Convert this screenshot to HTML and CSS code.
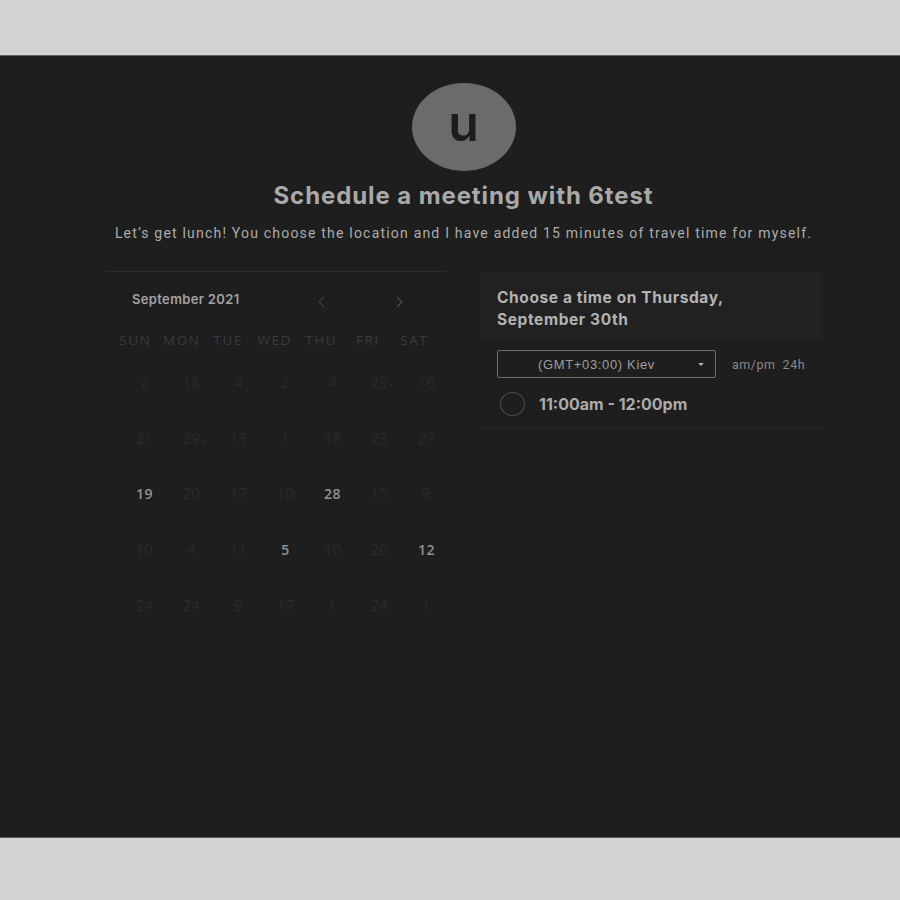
FILE: index.html
```html
<!DOCTYPE html>
<html>
<head>
<meta charset="utf-8">
<link rel="stylesheet" href="styles.css">
</head>
<body>
<div class="band"></div>
<main class="main">
  <div class="content">
    <header class="head">
      <div class="avatar">u</div>
      <h1 class="title">Schedule a meeting with 6test</h1>
      <p class="subtitle">Let’s get lunch! You choose the location and I have added 15 minutes of travel time for myself.</p>
    </header>
    <div class="cols">
      <section class="cal">
        <div class="cal-top">
          <span class="month">September 2021</span>
          <span class="arrow prev"><svg width="10" height="12" viewBox="0 0 10 12"><path d="M7 1 L2 6 L7 11" fill="none" stroke="currentColor" stroke-width="1.3"/></svg></span>
          <span class="arrow next"><svg width="10" height="12" viewBox="0 0 10 12"><path d="M3 1 L8 6 L3 11" fill="none" stroke="currentColor" stroke-width="1.3"/></svg></span>
        </div>
        <div class="weekdays">
          <span>SUN</span><span>MON</span><span>TUE</span><span>WED</span><span>THU</span><span>FRI</span><span>SAT</span>
        </div>
        <div class="days">
          <span>2</span><span>18</span><span>4</span><span>2</span><span>4</span><span class="dot">29</span><span>16</span>
          <span>21</span><span class="dot">29</span><span>13</span><span>1</span><span>18</span><span>23</span><span>27</span>
          <span class="on">19</span><span>20</span><span>17</span><span>10</span><span class="on">28</span><span>15</span><span>9</span>
          <span>10</span><span>4</span><span>11</span><span class="on">5</span><span>10</span><span>20</span><span class="on">12</span>
          <span>24</span><span>24</span><span>9</span><span>17</span><span>1</span><span>24</span><span>1</span>
        </div>
      </section>
      <section class="times">
        <div class="times-head">Choose a time on Thursday,<br>September 30th</div>
        <div class="tz-row">
          <div class="select"><span class="select-text">(GMT+03:00) Kiev</span><span class="caret"></span></div>
          <div class="fmt">am/pm&nbsp; 24h</div>
        </div>
        <div class="slot">
          <span class="radio"></span>
          <span class="slot-text">11:00am - 12:00pm</span>
        </div>
      </section>
    </div>
  </div>
</main>
<div class="band"></div>
</body>
</html>
```
FILE: styles.css
```css
html, body {
  margin: 0;
  padding: 0;
  background: #d3d3d3;
}
.band {
  height: 55px;
  background: #d3d3d3;
}
.band:last-child {
  height: 61px;
}
.main {
  height: 781px;
  background: #1e1e1e;
  border-top: 1px solid #5e5e5e;
  border-bottom: 1px solid #5e5e5e;
  padding-left: 105px;
  box-sizing: content-box;
}
.content {
  width: 717px;
}
.head {
  display: flex;
  flex-direction: column;
  align-items: center;
  padding-top: 27px;
}
.avatar {
  width: 104px;
  height: 88px;
  border-radius: 50%;
  background: #6b6b6b;
  color: #1c1c1c;
  font-family: Inter, "Noto Sans", sans-serif;
  font-weight: 600;
  font-size: 50px;
  line-height: 80px;
  text-align: center;
}
.title {
  margin: 11px 0 0;
  font-family: Inter, "Noto Sans", sans-serif;
  font-weight: 700;
  font-size: 24px;
  line-height: 28px;
  color: #a9a9a9;
  letter-spacing: 0.9px;
}
.subtitle {
  margin: 13px 0 0;
  font-family: Roboto, "Noto Sans", sans-serif;
  font-size: 14px;
  line-height: 20px;
  color: #acacac;
  letter-spacing: 1.2px;
  white-space: nowrap;
}
.cols {
  display: flex;
  gap: 33px;
  margin-top: 28px;
}
.cal {
  width: 342px;
  border-top: 1px solid #2b2b2b;
}
.cal-top {
  display: flex;
  align-items: center;
  height: 56px;
  padding-left: 27px;
  box-sizing: border-box;
}
.month {
  font-family: Inter, "Noto Sans", sans-serif;
  font-weight: 600;
  font-size: 13px;
  letter-spacing: 0.35px;
  color: #a3a3a3;
  width: 185px;
  margin-top: -2px;
}
.arrow {
  display: flex;
  color: #3c3c3c;
  margin-top: 4px;
}
.arrow.next {
  margin-left: 67px;
  color: #4a4a4a;
}
.weekdays {
  display: grid;
  grid-template-columns: repeat(7, 46.5px);
  padding-left: 7px;
  font-family: "Open Sans", "Noto Sans", sans-serif;
  font-size: 13.5px;
  letter-spacing: 1.5px;
  color: #3b3b3b;
  height: 24px;
  line-height: 24px;
}
.weekdays span {
  text-align: center;
}
.days {
  display: grid;
  grid-template-columns: repeat(7, 47px);
  grid-auto-rows: 55.7px;
  padding-left: 16px;
  margin-top: 19px;
  font-family: "Open Sans", "Noto Sans", sans-serif;
  font-size: 14px;
  font-weight: 300;
  color: #313131;
  letter-spacing: 0.5px;
}
.days span {
  text-align: center;
  line-height: 24px;
  position: relative;
}
.days span.on {
  color: #929292;
  font-weight: 600;
}
.days span.dot::after {
  content: "";
  position: absolute;
  width: 2px;
  height: 2px;
  background: #2c2c2c;
  top: 13px;
  margin-left: 2px;
}
.times {
  width: 342px;
}
.times-head {
  background: #212121;
  height: 70px;
  box-sizing: border-box;
  padding: 16px 17px 0;
  font-family: Inter, "Noto Sans", sans-serif;
  font-weight: 700;
  font-size: 15.5px;
  letter-spacing: 0.6px;
  line-height: 22px;
  color: #b3b3b3;
}
.tz-row {
  display: flex;
  align-items: center;
  padding-left: 17px;
  margin-top: 9px;
}
.select {
  width: 219px;
  height: 28px;
  box-sizing: border-box;
  border: 1px solid #6f6f6f;
  border-radius: 2px;
  display: flex;
  align-items: center;
  padding-left: 40px;
}
.select-text {
  font-family: "Liberation Sans", Arial, sans-serif;
  font-size: 13px;
  letter-spacing: 0.65px;
  color: #9e9e9e;
}
.caret {
  width: 0;
  height: 0;
  border-left: 3.5px solid transparent;
  border-right: 3.5px solid transparent;
  border-top: 3px solid #b0b0b0;
  margin-left: auto;
  margin-right: 11px;
}
.fmt {
  margin-left: 16px;
  font-family: Roboto, "Noto Sans", sans-serif;
  font-size: 12.5px;
  color: #8a8a8a;
  letter-spacing: 0.5px;
}
.slot {
  display: flex;
  align-items: center;
  height: 50px;
  padding-left: 20px;
  padding-top: 2px;
  border-bottom: 1px solid #282828;
  box-sizing: border-box;
}
.radio {
  width: 25px;
  height: 24px;
  border-radius: 50%;
  border: 1px solid #4d4d4d;
  box-sizing: border-box;
}
.slot-text {
  margin-left: 14px;
  font-family: Inter, "Noto Sans", sans-serif;
  font-weight: 700;
  font-size: 16px;
  color: #ababab;
}
```
